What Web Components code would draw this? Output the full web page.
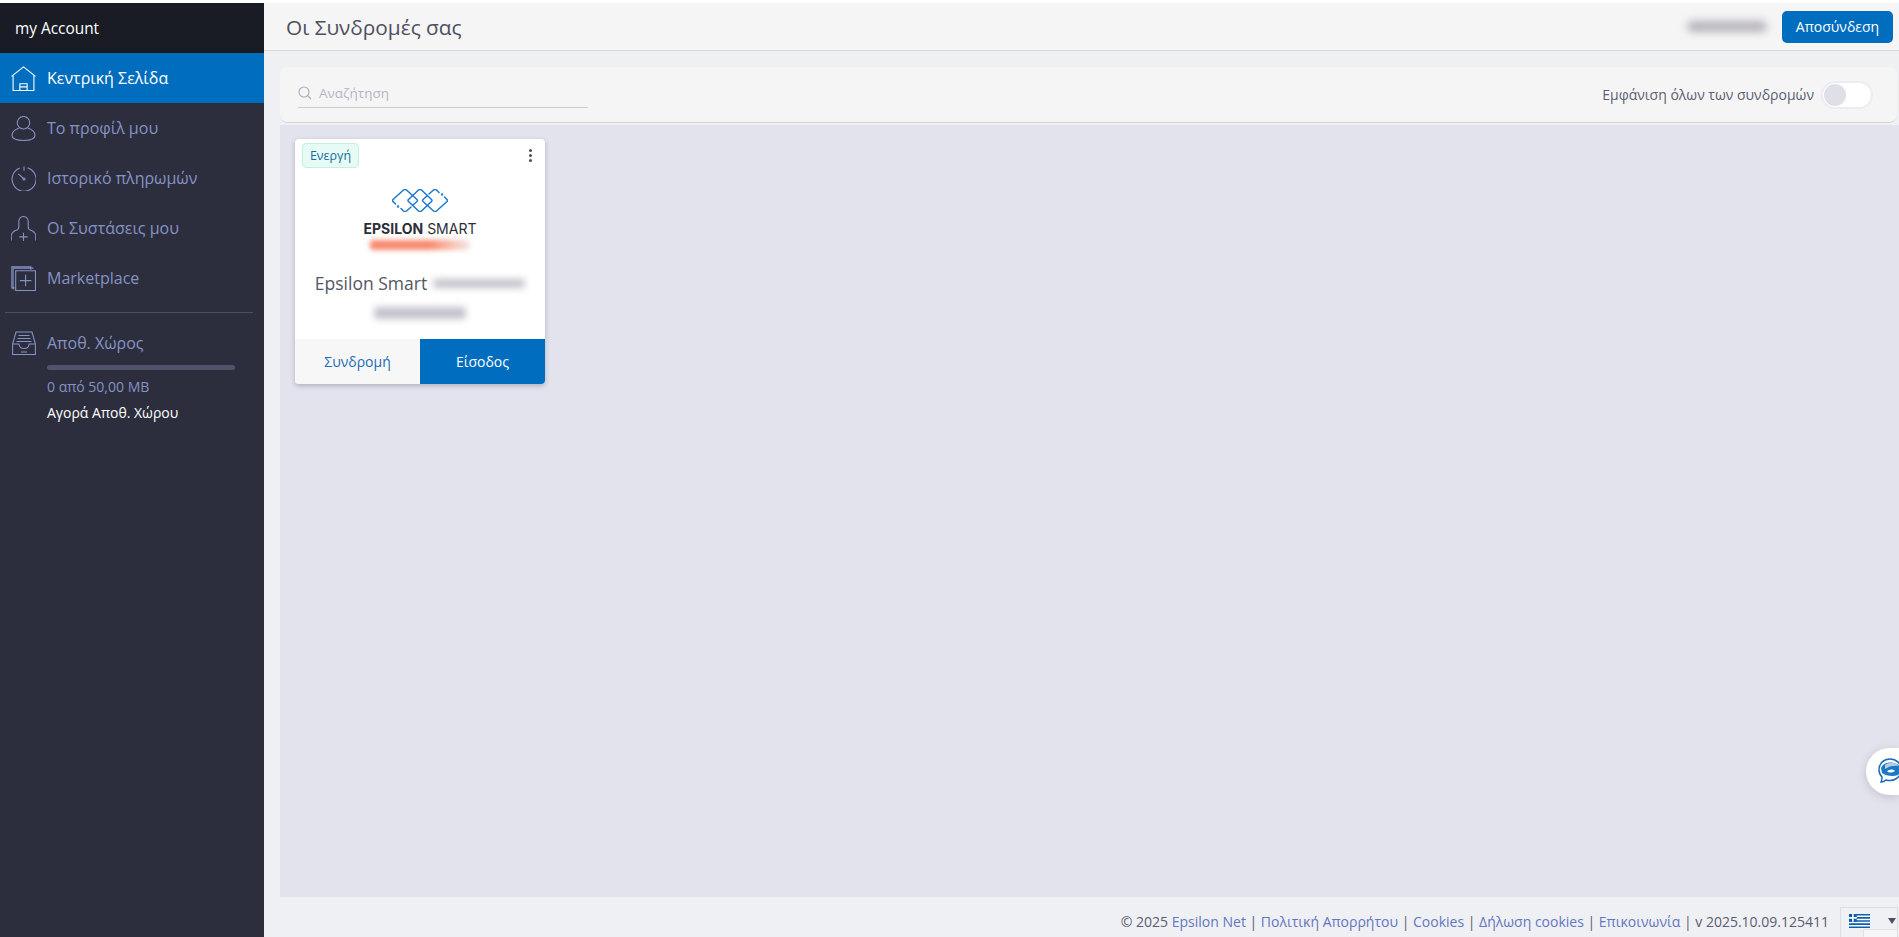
<!DOCTYPE html>
<html lang="el">
<head>
<meta charset="utf-8">
<title>my Account</title>
<style>
    html, body { margin: 0; height: 100%; }
    body { font-family: "Open Sans", "Noto Sans", sans-serif; background: #fff; overflow: hidden; }
</style>
</head>
<body>
<app-shell>
    <side-bar slot="side">
        <nav-item active icon="home" label="Κεντρική Σελίδα"></nav-item>
        <nav-item icon="user" label="Το προφίλ μου"></nav-item>
        <nav-item icon="clock" label="Ιστορικό πληρωμών"></nav-item>
        <nav-item icon="refer" label="Οι Συστάσεις μου"></nav-item>
        <nav-item icon="market" label="Marketplace"></nav-item>
    </side-bar>
    <top-bar slot="top"></top-bar>
    <search-bar slot="search"></search-bar>
    <sub-card slot="cards"></sub-card>
    <page-footer slot="footer"></page-footer>
    <chat-bubble slot="float"></chat-bubble>
</app-shell>

<script>
// icons of the side menu, all drawn on a 24x24 box
const ICONOS = {
    home: '<path d="M.5 10 12 .8 23.500 10M2 9v14.500h20V9M8.500 23.500V17h7v6.500M8.500 20h7"/>',
    user: '<ellipse cx="12" cy="6.500" rx="6" ry="6"/><path d="M8 11.500C3.500 13 1 15 1 18.500c0 3.500 4 5 11 5s11-1.500 11-5c0-3.500-2.500-5.500-7-7"/>',
    clock: '<path d="M8.500 2A11.500 11.500 0 1 0 16 1.800"/><path d="M12.500 .5v4M7 7.500l5.500 5"/><circle cx="12.500" cy="12.500" r="1"/>',
    refer: '<path d="M7.500 10V5a4.500 4.500 0 0 1 9 0v5c0 2 .5 3 2 3.500 3 1 5 2.500 5.500 6M7.500 10c0 2-.5 3-2 3.500-3 1-5 2.500-5.500 6M.3 23.500v-4M23.700 23.500v-4M12 16v8M8 20h8"/>',
    market: '<path d="M3.500 21H.8V.8H19v2.700"/><path d="M2 22.500V2h19.500"/><path d="M4.500 4.500h19v19h-19zM14 8.500v11M8.500 14h11"/>',
    inbox: '<path d="M.6 13 4 1h16l3.400 12M.6 13v10.500h22.800V13h-6.400c0 3-2 4.500-5 4.500S7 16 7 13zM6.500 4.500h11M5.500 7.500h13M4.500 10.500h15M9 21h6"/>'
};

function icono(nombre, tam) {
    return `<svg width="${tam}" height="${tam}" viewBox="0 0 24 24" fill="none" stroke="currentColor" stroke-width="1.050">${ICONOS[nombre]}</svg>`;
}

class AppShell extends HTMLElement {
    connectedCallback() {
        const shadow = this.attachShadow({mode: 'open'});
        shadow.innerHTML = `
        <style>
            :host { display: block; height: 937px; padding-top: 3px; box-sizing: border-box; }
            .app { display: grid; grid-template-columns: 264px 1fr; height: 934px; }
            .main { display: flex; flex-direction: column; background: #eff0f4; min-width: 0; position: relative; }
            .content { flex: 1; margin-left: 16px; background: #e2e3ec; display: flex; flex-direction: column; min-height: 0; }
            .head { background: #eff0f4; margin-left: -16px; padding: 16px 0 2px 16px; }
            .cards { padding: 14px 15px; }
        </style>
        <div class="app">
            <slot name="side"></slot>
            <div class="main">
                <slot name="top"></slot>
                <div class="content">
                    <div class="head"><slot name="search"></slot></div>
                    <div class="cards"><slot name="cards"></slot></div>
                </div>
                <slot name="footer"></slot>
                <slot name="float"></slot>
            </div>
        </div>`;
    }
}

class SideBar extends HTMLElement {
    connectedCallback() {
        const shadow = this.attachShadow({mode: 'open'});
        shadow.innerHTML = `
        <style>
            :host { display: block; background: #2d2e3d; color: #8592c4; font-size: 16px; }
            .brand { height: 50px; background: #1a1c25; color: #fff; font-size: 15.400px; display: flex; align-items: center; padding-left: 15px; }
            hr { border: 0; border-top: 1px solid #4d4f62; margin: 9px 11px 5px 5px; }
            .storage { display: grid; grid-template-columns: 36px 1fr; padding-left: 11px; }
            .ico { color: #8592c4; height: 50px; display: flex; align-items: center; }
            .ico svg { margin-left: 1px; }
            .tit { height: 50px; line-height: 50px; }
            .bar { height: 5px; width: 188px; background: #51536a; border-radius: 3px; margin-top: -3px; }
            .used { font-size: 14px; margin-top: 7px; line-height: 19px; color: #8592c4; }
            .buy { font-size: 14px; margin-top: 7px; line-height: 19px; color: #fff; }
        </style>
        <div class="brand">my Account</div>
        <slot></slot>
        <hr>
        <div class="storage">
            <div class="ico">${icono('inbox', 24)}</div>
            <div class="tit">Αποθ. Χώρος</div>
            <div></div>
            <div>
                <div class="bar"></div>
                <div class="used">0 από 50,00 MB</div>
                <div class="buy">Αγορά Αποθ. Χώρου</div>
            </div>
        </div>`;
    }
}

class NavItem extends HTMLElement {
    connectedCallback() {
        const shadow = this.attachShadow({mode: 'open'});
        shadow.innerHTML = `
        <style>
            :host { display: flex; align-items: center; height: 50px; padding-left: 11px; font-size: 16px; color: #8592c4; }
            :host([active]) { background: #006dbf; color: #fff; }
            svg { display: block; }
            .i { width: 36px; flex: none; }
        </style>
        <span class="i">${icono(this.getAttribute('icon'), 25)}</span>
        <span>${this.getAttribute('label')}</span>`;
    }
}

class TopBar extends HTMLElement {
    connectedCallback() {
        const shadow = this.attachShadow({mode: 'open'});
        shadow.innerHTML = `
        <style>
            :host { display: flex; align-items: center; height: 48px; box-sizing: border-box; border-bottom: 1px solid #d8d8da; background: #f5f5f5; padding: 0 6px 0 22px; }
            h1 { font-size: 20.800px; font-weight: 400; color: #4d5060; margin: 0; flex: 1; }
            .blur { width: 80px; height: 11px; background: #b5b2bb; filter: blur(4px); border-radius: 6px; margin-right: 15px; }
            button { font: inherit; font-size: 14px; color: #fff; background: #006dbf; border: 0; border-radius: 5px; height: 32px; width: 111px; padding: 0; }
        </style>
        <h1>Οι Συνδρομές σας</h1>
        <div class="blur"></div>
        <button>Αποσύνδεση</button>`;
    }
}

class SearchBar extends HTMLElement {
    connectedCallback() {
        const shadow = this.attachShadow({mode: 'open'});
        shadow.innerHTML = `
        <style>
            :host { display: flex; align-items: center; justify-content: space-between; height: 56px; box-sizing: border-box; margin-right: 2px; background: #f5f5f5; border-radius: 8px; border-bottom: 1px solid #d4d4d8; padding: 0 24px 0 18px; }
            .campo { align-self: flex-start; margin-top: 7px; width: 290px; height: 34px; box-sizing: border-box; border-bottom: 1px solid #ccc; display: flex; align-items: center; gap: 7px; color: #b4b6c4; font-size: 13.500px; padding-top: 4px; }
            .dcha { display: flex; align-items: center; gap: 7px; color: #5a5d70; font-size: 14px; }
            .sw { width: 52px; height: 28px; box-sizing: border-box; background: #fff; border: 2px solid #ececf2; border-radius: 14px; padding: 1px; }
            .sw i { display: block; width: 22px; height: 22px; background: #dfe0e7; border-radius: 50%; }
            svg { display: block; }
        </style>
        <div class="campo">
            <svg width="14" height="14" viewBox="0 0 14 14" fill="none" stroke="#a9abb9" stroke-width="1.100"><circle cx="6" cy="6" r="5"/><path d="m9.500 9.500 3.500 3.500"/></svg>
            <span>Αναζήτηση</span>
        </div>
        <div class="dcha">
            <span>Εμφάνιση όλων των συνδρομών</span>
            <div class="sw"><i></i></div>
        </div>`;
    }
}

class SubCard extends HTMLElement {
    connectedCallback() {
        const shadow = this.attachShadow({mode: 'open'});
        shadow.innerHTML = `
        <style>
            :host { display: flex; flex-direction: column; width: 250px; height: 245px; background: #fff; border-radius: 4px; box-shadow: 0 2px 5px rgba(60,60,90,.3); overflow: hidden; }
            .top { display: flex; justify-content: space-between; padding: 4px 8px 0 7px; height: 31px; box-sizing: border-box; }
            .badge { font-size: 12.500px; color: #1a6a9a; background: #e6fbf5; border: 1px solid #c4f0e4; border-radius: 4px; width: 57px; height: 25px; box-sizing: border-box; display: flex; align-items: center; justify-content: center; }
            .dots { display: flex; flex-direction: column; gap: 2px; padding: 6px 5px 0 0; }
            .dots i { display: block; width: 3px; height: 3px; border-radius: 50%; background: #4d5060; }
            .logo { display: flex; flex-direction: column; align-items: center; }
            .logo svg { display: block; margin-top: 19px; }
            .marca { font-family: Inter, "Open Sans", sans-serif; font-size: 14px; line-height: 20px; color: #2b2d38; margin-top: 7px; white-space: nowrap; }
            .marca b { font-weight: 700; }
            .marca span { font-weight: 400; }
            .rojo { width: 100px; height: 10px; background: linear-gradient(90deg, #f98a70 60%, #f9c6b8 85%, #f0e8e8); filter: blur(2.500px); margin-top: 1px; border-radius: 3px; }
            .nombre { display: flex; align-items: center; justify-content: center; gap: 6px; font-size: 17.500px; line-height: 24px; color: #525666; margin-top: 21px; white-space: nowrap; }
            .g1 { width: 92px; height: 9px; background: #c4c1cb; filter: blur(3.500px); border-radius: 4px; }
            .g2 { width: 92px; height: 12px; background: #c4c1cb; filter: blur(3.500px); border-radius: 4px; margin: 12px auto 0; }
            .pie { margin-top: auto; display: grid; grid-template-columns: 125px 125px; height: 45px; font-size: 14px; }
            .pie div { display: flex; align-items: center; justify-content: center; }
            .sus { background: #f7f7f7; color: #1a6cb5; }
            .ent { background: #006dbf; color: #fff; }
        </style>
        <div class="top">
            <div class="badge">Ενεργή</div>
            <div class="dots"><i></i><i></i><i></i></div>
        </div>
        <div class="logo">
            <svg width="56" height="23" viewBox="0 0 56 23" fill="none" stroke="#1b79cf" stroke-width="1.500" stroke-linecap="round" stroke-linejoin="round">
                <path d="M3.500 15 1 12.500Q0 11.500 1 10.500L11.500 1Q13 0 14.500 1L25 10.500Q26 11.500 25 12.500L21 16"/>
                <path d="M9 19.500 11.500 22Q13 23 14.500 22L19 18"/>
                <path d="M16.500 10.500 26.500 1Q28 0 29.500 1L39.500 10.500Q40.500 11.500 39.500 12.500L29.500 22Q28 23 26.500 22L16.500 12.500Q15.500 11.500 16.500 10.500Z"/>
                <path d="M52.500 8 55 10.500Q56 11.500 55 12.500L44.500 22Q43 23 41.500 22L31 12.500Q30 11.500 31 10.500L35 7"/>
                <path d="M47 3.500 44.500 1Q43 0 41.500 1L37 5"/>
                <circle cx="6" cy="17.500" r=".5"/><circle cx="50" cy="5.500" r=".5"/>
            </svg>
            <div class="marca"><b>EPSILON</b> <span>SMART</span></div>
            <div class="rojo"></div>
        </div>
        <div class="nombre"><span>Epsilon Smart</span><div class="g1"></div></div>
        <div class="g2"></div>
        <div class="pie">
            <div class="sus">Συνδρομή</div>
            <div class="ent">Είσοδος</div>
        </div>`;
    }
}

class PageFooter extends HTMLElement {
    connectedCallback() {
        const shadow = this.attachShadow({mode: 'open'});
        shadow.innerHTML = `
        <style>
            :host { display: flex; align-items: center; justify-content: flex-end; height: 40px; font-size: 14px; color: #5a5d70; padding-right: 1px; }
            a { color: #6476c0; text-decoration: none; }
            .txt { padding-top: 8px; margin-right: 11px; white-space: pre; }
            .lang { width: 58px; height: 30px; box-sizing: border-box; border: 1px solid #dcdde3; border-bottom: 0; margin-top: 10px; display: flex; align-items: center; gap: 18px; padding: 0 0 4px 8px; background: #f0f1f5; position: relative; overflow: hidden; }
            .lang i { width: 0; height: 0; border: 4px solid transparent; border-top: 6px solid #4d5060; border-bottom: 0; }
            .lang u { position: absolute; left: 22px; top: 21px; width: 40px; height: 12px; background: #f6f6f8; border: 1px solid #e2e3e8; }
            svg { display: block; }
        </style>
        <span class="txt">© 2025 <a>Epsilon Net</a> | <a>Πολιτική Απορρήτου</a> | <a>Cookies</a> | <a>Δήλωση cookies</a> | <a>Επικοινωνία</a> | v 2025.10.09.125411</span>
        <div class="lang">
            <svg width="21" height="14" viewBox="0 0 27 18"><rect width="27" height="18" fill="#0d5eaf"/><path d="M0 3h27M0 7h27M0 11h27M0 15h27" stroke="#fff" stroke-width="2"/><rect width="10" height="10" fill="#0d5eaf"/><path d="M5 0v10M0 5h10" stroke="#fff" stroke-width="2"/></svg>
            <i></i>
            <u></u>
        </div>`;
    }
}

class ChatBubble extends HTMLElement {
    connectedCallback() {
        const shadow = this.attachShadow({mode: 'open'});
        shadow.innerHTML = `
        <style>
            :host { position: absolute; right: 0; top: 745px; width: 33px; height: 47px; background: #fff; border-radius: 24px 0 0 24px; box-shadow: 0 2px 10px rgba(60,60,90,.2); overflow: hidden; display: block; }
            svg { display: block; margin: 10px 0 0 12px; }
        </style>
        <svg width="24" height="26" viewBox="0 0 24 26">
            <path d="M3 24c2 0 4-1 5-2 7 2 15-2 15-10C23 5 18 1 12 1S1 5 1 12c0 3 1 5 3 7 0 2-.5 4-1 5z" fill="#fff" stroke="#1b6cb5" stroke-width="1.500"/>
            <path d="M3 10C5 4 15 2 22 8c1 4 0 7-2 9-5 2-12 1-16-2z" fill="#1b79c4"/>
            <path d="M7 7c4-3 10-3 14 1-5-1-10 0-14 3z" fill="#b9cde0"/>
            <path d="M9 13c3-2 6-2 8 0-3 2-6 2-8 0z" fill="#fff"/>
        </svg>`;
    }
}

customElements.define('app-shell', AppShell);
customElements.define('side-bar', SideBar);
customElements.define('nav-item', NavItem);
customElements.define('top-bar', TopBar);
customElements.define('search-bar', SearchBar);
customElements.define('sub-card', SubCard);
customElements.define('page-footer', PageFooter);
customElements.define('chat-bubble', ChatBubble);
</script>
</body>
</html>
